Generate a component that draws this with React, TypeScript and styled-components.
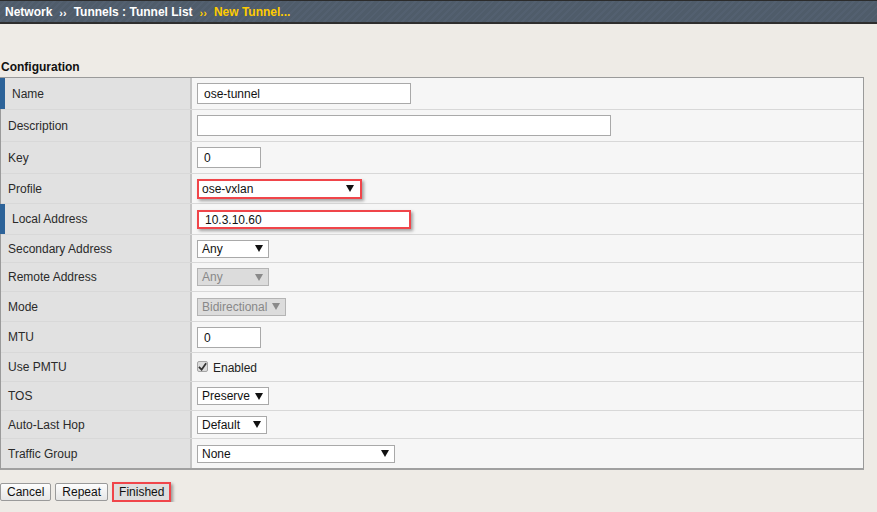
import { FC, ReactElement } from 'react';
import styled, { createGlobalStyle } from 'styled-components';

const GlobalStyle = createGlobalStyle`
  html, body {
    margin: 0;
    padding: 0;
    background: #eeebe6;
    font-family: "Liberation Sans", Arial, sans-serif;
    font-size: 12px;
    color: #222;
  }
`;

interface FieldRow {
  label: string;
  required?: boolean;
  height: number;
  control: ReactElement;
}

const Arrow: FC<{ disabled?: boolean }> = ({ disabled }) => (
  <svg width="8" height="7" viewBox="0 0 8 7">
    <path d="M0 0 H8 L4 7 Z" fill={disabled ? '#8a8a8a' : '#111'} />
  </svg>
);

const Select: FC<{ value: string; width: number; disabled?: boolean; flagged?: boolean }> = ({
  value,
  width,
  disabled,
  flagged,
}) => (
  <SelectBox $width={width} $disabled={disabled} $flagged={flagged}>
    <span>{value}</span>
    <Arrow disabled={disabled} />
  </SelectBox>
);

const Check = () => (
  <CheckBox>
    <svg width="10" height="9" viewBox="0 0 10 9">
      <path d="M1 5 L4 8 L9 1" stroke="#333" strokeWidth="2" fill="none" />
    </svg>
  </CheckBox>
);

// built lazily, the styled parts live further down the file
const buildRows = (): FieldRow[] => [
  { label: 'Name', required: true, height: 31, control: <TextInput $width={214} value="ose-tunnel" readOnly /> },
  { label: 'Description', height: 32, control: <TextInput $width={414} value="" readOnly /> },
  { label: 'Key', height: 32, control: <TextInput $width={64} value="0" readOnly /> },
  { label: 'Profile', height: 30, control: <Select value="ose-vxlan" width={165} flagged /> },
  {
    label: 'Local Address',
    required: true,
    height: 31,
    control: <TextInput $width={214} $flagged value="10.3.10.60" readOnly />,
  },
  { label: 'Secondary Address', height: 28, control: <Select value="Any" width={72} /> },
  { label: 'Remote Address', height: 29, control: <Select value="Any" width={72} disabled /> },
  { label: 'Mode', height: 30, control: <Select value="Bidirectional" width={89} disabled /> },
  { label: 'MTU', height: 31, control: <TextInput $width={64} value="0" readOnly /> },
  {
    label: 'Use PMTU',
    height: 29,
    control: (
      <CheckLabel>
        <Check />
        Enabled
      </CheckLabel>
    ),
  },
  { label: 'TOS', height: 29, control: <Select value="Preserve" width={72} /> },
  { label: 'Auto-Last Hop', height: 28, control: <Select value="Default" width={70} /> },
  { label: 'Traffic Group', height: 30, control: <Select value="None" width={198} /> },
];

const App: FC = () => (
  <>
    <GlobalStyle />
    <Breadcrumb>
      <Crumb>Network</Crumb>
      <Sep>››</Sep>
      <Crumb>Tunnels : Tunnel List</Crumb>
      <Sep $current>››</Sep>
      <Crumb $current>New Tunnel...</Crumb>
    </Breadcrumb>
    <Heading>Configuration</Heading>
    <FormTable>
      {buildRows().map((r) => (
        <Row key={r.label} $height={r.height}>
          <LabelCell $required={r.required}>{r.label}</LabelCell>
          <ValueCell>{r.control}</ValueCell>
        </Row>
      ))}
    </FormTable>
    <Buttons>
      <Button>Cancel</Button>
      <Button>Repeat</Button>
      <Button $flagged>Finished</Button>
    </Buttons>
  </>
);

const Breadcrumb = styled.div`
  display: flex;
  align-items: center;
  gap: 6px;
  height: 21px;
  padding: 0 5px;
  border-top: 1px solid #2b2b2b;
  border-bottom: 2px solid #2e2e2e;
  background: repeating-linear-gradient(
    135deg,
    #4f5c6a 0px,
    #4f5c6a 3px,
    #536070 3px,
    #536070 5px
  );
  font-weight: bold;
  font-size: 12px;
`;

const Crumb = styled.span<{ $current?: boolean }>`
  color: ${(p) => (p.$current ? '#ffcc00' : '#ffffff')};
`;

const Sep = styled.span<{ $current?: boolean }>`
  color: ${(p) => (p.$current ? '#ffcc00' : '#ffffff')};
  font-size: 11px;
  margin: 2px 1px 0;
`;

const Heading = styled.div`
  margin: 36px 0 0 1px;
  font-weight: bold;
  line-height: 14px;
  color: #111;
`;

const FormTable = styled.div`
  margin-top: 3px;
  width: 862px;
  border: 1px solid #9a9a9a;
  border-bottom: 2px solid #a0a0a0;
  background: #f6f6f6;
`;

const Row = styled.div<{ $height: number }>`
  box-sizing: border-box;
  display: grid;
  grid-template-columns: 191px 1fr;
  height: ${(p) => p.$height}px;
  border-top: 1px solid #d8d8d8;

  &:first-child {
    border-top: none;
  }
`;

const LabelCell = styled.div<{ $required?: boolean }>`
  display: flex;
  align-items: center;
  padding-left: 7px;
  background: #e1e1e1;
  border-right: 2px solid #c4c4c4;
  border-left: ${(p) => (p.$required ? '5px solid #2d6399' : 'none')};
  margin-left: ${(p) => (p.$required ? '-1px' : '0')};
  color: #2a2a2a;
  white-space: nowrap;
`;

const ValueCell = styled.div`
  display: flex;
  align-items: center;
  padding-left: 5px;
`;

const TextInput = styled.input<{ $width: number; $flagged?: boolean }>`
  box-sizing: border-box;
  width: ${(p) => p.$width}px;
  height: ${(p) => (p.$flagged ? 19 : 21)}px;
  padding: 1px 6px 0;
  background: #fff;
  border: ${(p) => (p.$flagged ? '2px solid #f0454a' : '1px solid #a9a9a9')};
  box-shadow: ${(p) => (p.$flagged ? '2px 2px 3px rgba(0,0,0,0.35)' : 'none')};
  font-family: "Liberation Sans", Arial, sans-serif;
  font-size: 12px;
  color: #111;
  outline: none;
`;

const SelectBox = styled.div<{ $width: number; $disabled?: boolean; $flagged?: boolean }>`
  box-sizing: border-box;
  display: flex;
  align-items: center;
  justify-content: space-between;
  width: ${(p) => p.$width}px;
  height: ${(p) => (p.$flagged ? 20 : 18)}px;
  padding: 0 ${(p) => (p.$flagged ? 6 : 5)}px 0 ${(p) => (p.$flagged ? 3 : 4)}px;
  background: ${(p) => (p.$disabled ? '#dcdcdc' : '#fff')};
  border: ${(p) =>
    p.$flagged ? '2px solid #f0454a' : `1px solid ${p.$disabled ? '#b4b4b4' : '#a9a9a9'}`};
  box-shadow: ${(p) => (p.$flagged ? '2px 2px 3px rgba(0,0,0,0.35)' : 'none')};
  color: ${(p) => (p.$disabled ? '#888' : '#111')};
  font-size: 12px;
`;

const CheckLabel = styled.label`
  display: flex;
  align-items: center;
  gap: 5px;
  margin-top: 2px;
  color: #222;
`;

const CheckBox = styled.span`
  box-sizing: border-box;
  display: inline-flex;
  align-items: center;
  justify-content: center;
  width: 11px;
  height: 11px;
  margin-top: -3px;
  background: #dcdcdc;
  border: 1px solid #a5a5a5;
  border-radius: 2px;
`;

const Buttons = styled.div`
  display: flex;
  gap: 4px;
  margin-top: 13px;
  padding-left: 0;
`;

const Button = styled.button<{ $flagged?: boolean }>`
  box-sizing: border-box;
  height: ${(p) => (p.$flagged ? 20 : 18)}px;
  margin-top: ${(p) => (p.$flagged ? -1 : 0)}px;
  padding: 0 ${(p) => (p.$flagged ? 5 : 6)}px;
  font-family: "Liberation Sans", Arial, sans-serif;
  font-size: 12px;
  color: #111;
  background: ${(p) => (p.$flagged ? '#dedede' : 'linear-gradient(#fdfdfd, #e6e6e6)')};
  border: ${(p) => (p.$flagged ? '2px solid #f0454a' : '1px solid #9a9a9a')};
  border-radius: ${(p) => (p.$flagged ? 0 : 2)}px;
  box-shadow: ${(p) => (p.$flagged ? '2px 2px 3px rgba(0,0,0,0.35)' : 'none')};
`;

export default App;
